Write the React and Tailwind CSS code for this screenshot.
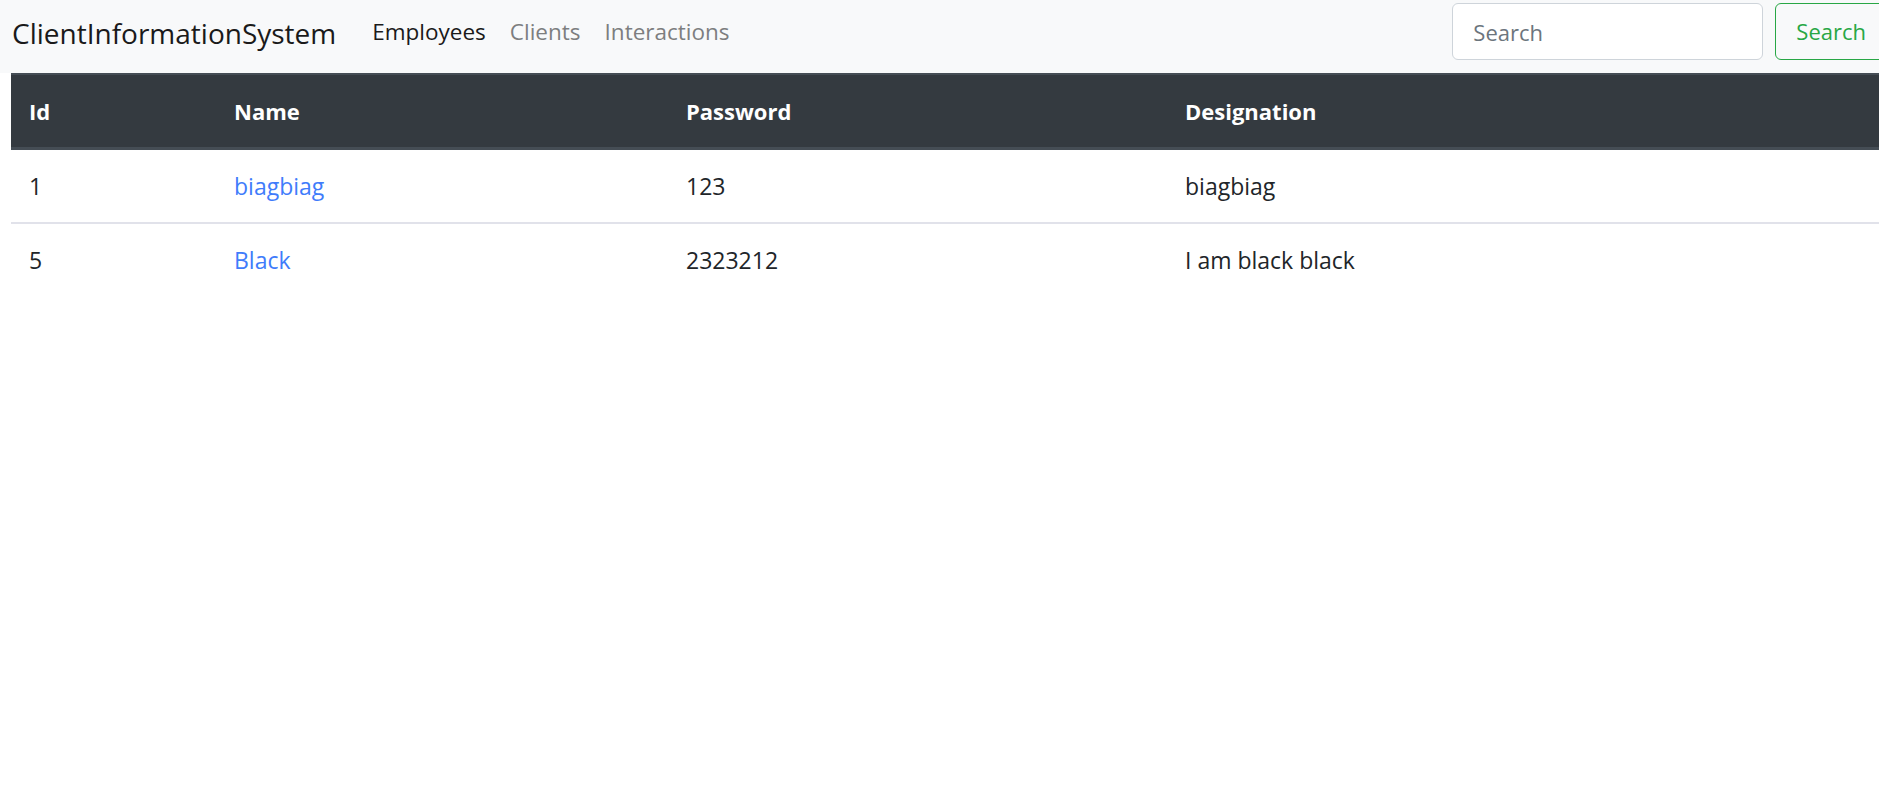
import React from "react";

const rows = [
  { id: "1", name: "biagbiag", password: "123", designation: "biagbiag" },
  { id: "5", name: "Black", password: "2323212", designation: "I am black black" },
];

export default function App() {
  return (
    <div
      className="min-h-screen w-full overflow-hidden bg-white text-[#212529]"
      style={{ fontFamily: '"Open Sans", "Noto Sans", Arial, sans-serif' }}
    >
      <nav className="flex h-[73px] items-start bg-[#f8f9fa] pl-[12px]">
        <div className="flex h-[65px] items-center">
          <span className="mr-[24px] text-[28px] leading-none text-[#1a1a1a]">
            ClientInformationSystem
          </span>
          <a className="px-[12px] text-[22.5px] leading-none text-[#1a1a1a]">Employees</a>
          <a className="px-[12px] text-[22.5px] leading-none text-[#7d7e7f]">Clients</a>
          <a className="px-[12px] text-[22.5px] leading-none text-[#7d7e7f]">Interactions</a>
        </div>
        <div className="-mr-[8px] ml-auto flex shrink-0 items-center gap-[12px] pt-[3px]">
          <input
            placeholder="Search"
            className="h-[57px] w-[311px] rounded-[6px] border border-[#ced4da] bg-white px-[20px] text-[22px] text-[#495057] outline-none placeholder:text-[#6c757d]"
          />
          <button className="h-[57px] rounded-[6px] border border-[#28a745] bg-transparent px-[20px] text-[22px] text-[#28a745]">
            Search
          </button>
        </div>
      </nav>
      <div className="ml-[11px]">
        <table className="w-[1880px] table-fixed border-collapse text-left text-[23px]">
          <colgroup>
            <col className="w-[205px]" />
            <col className="w-[452px]" />
            <col className="w-[499px]" />
            <col />
          </colgroup>
          <thead>
            <tr className="bg-[#343a40] text-white">
              {["Id", "Name", "Password", "Designation"].map((h) => (
                <th
                  key={h}
                  className="border-t-2 border-b-[3px] border-[#454d55] px-[18px] py-[18px] text-[22px] font-bold leading-[36px]"
                >
                  {h}
                </th>
              ))}
            </tr>
          </thead>
          <tbody>
            {rows.map((r, i) => (
              <tr key={r.id} className={i > 0 ? "border-t-2 border-[#e1e2ea]" : ""}>
                <td className="px-[18px] py-[18px] leading-[36px]">{r.id}</td>
                <td className="px-[18px] py-[18px] leading-[36px]">
                  <a className="text-[#3f7cfb]">{r.name}</a>
                </td>
                <td className="px-[18px] py-[18px] leading-[36px]">{r.password}</td>
                <td className="px-[18px] py-[18px] leading-[36px]">{r.designation}</td>
              </tr>
            ))}
          </tbody>
        </table>
      </div>
    </div>
  );
}
